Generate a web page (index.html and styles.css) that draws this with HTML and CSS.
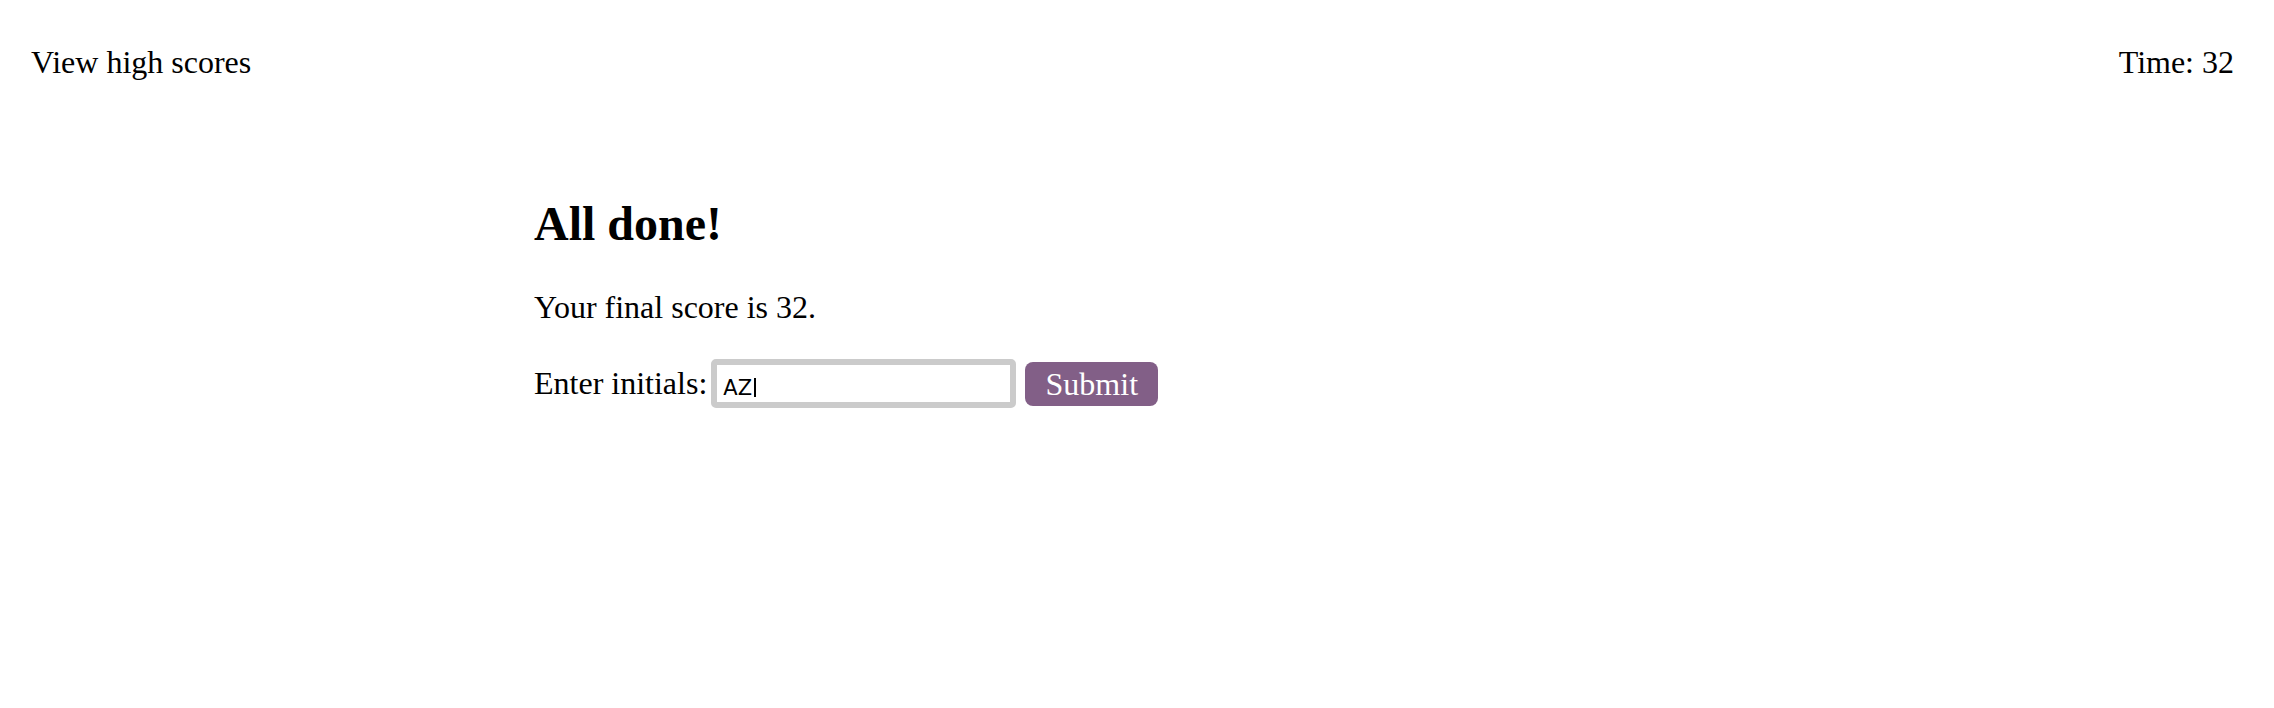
FILE: index.html
```html
<!DOCTYPE html>
<html lang="en">
<head>
<meta charset="utf-8">
<title>Code Quiz</title>
<link rel="stylesheet" href="styles.css">
</head>
<body>
<header class="topbar">
  <a class="highscores" href="#">View high scores</a>
  <span class="timer">Time: 32</span>
</header>
<main class="quiz">
  <section class="done">
    <h1 class="done-title">All done!</h1>
    <p class="done-score">Your final score is 32.</p>
    <form class="initials-form">
      <label class="initials-label" for="initials">Enter initials:</label>
      <span class="input-wrap">
        <input class="initials-input" id="initials" type="text" value="AZ">
        <span class="caret"></span>
      </span>
      <button class="submit-btn" type="button">Submit</button>
    </form>
  </section>
</main>
</body>
</html>
```
FILE: styles.css
```css
html, body {
  margin: 0;
  padding: 0;
  background: #ffffff;
}

body {
  font-family: "Liberation Serif", "Times New Roman", serif;
  color: #000000;
  font-size: 32px;
  line-height: normal;
}

.topbar {
  display: flex;
  justify-content: space-between;
  align-items: baseline;
  padding: 44px 40px 0 31px;
}

.highscores {
  color: #000000;
  text-decoration: none;
}

.timer {
  color: #000000;
}

.quiz {
  padding: 115px 0 0 534px;
}

.done-title {
  margin: 0;
  font-size: 48px;
  font-weight: bold;
  line-height: normal;
}

.done-score {
  margin: 38px 0 0 0;
  font-size: 32px;
}

.initials-form {
  display: flex;
  align-items: center;
  margin-top: 33px;
}

.initials-label {
  font-size: 32px;
}

.input-wrap {
  position: relative;
  display: block;
  margin-left: 4px;
  height: 49px;
}

.initials-input {
  display: block;
  box-sizing: border-box;
  width: 305px;
  height: 49px;
  margin: 0;
  padding: 8px 6px 0 6px;
  border: 6px solid #cbcbcb;
  border-radius: 5px;
  font-family: "DejaVu Sans", "Liberation Sans", sans-serif;
  font-size: 21px;
  color: #000000;
  background: #ffffff;
  outline: none;
}

.caret {
  position: absolute;
  left: 43px;
  top: 19px;
  width: 2px;
  height: 19px;
  background: #000000;
}

.submit-btn {
  box-sizing: border-box;
  width: 133px;
  height: 44px;
  margin-left: 9px;
  padding: 0;
  border: none;
  border-radius: 8px;
  background: #825f87;
  color: #ffffff;
  font-family: "Liberation Serif", "Times New Roman", serif;
  font-size: 32px;
  line-height: 44px;
  cursor: pointer;
}
```
